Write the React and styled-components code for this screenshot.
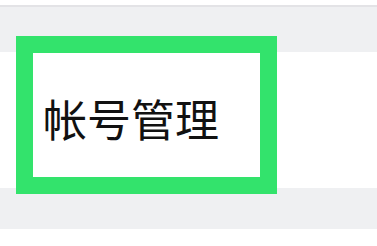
import styled, { createGlobalStyle } from 'styled-components';

const GlobalStyle = createGlobalStyle`
  html, body {
    margin: 0;
    padding: 0;
    background: #ffffff;
    font-family: "Noto Sans CJK SC", "Noto Sans", sans-serif;
  }
`;

const Page = styled.div`
  width: 377px;
  min-height: 246px;
  background: #ffffff;
`;

const TopBar = styled.div`
  height: 5px;
  background: #ffffff;
  border-bottom: 2px solid #e3e3e6;
`;

const Band = styled.div`
  height: ${(p) => p.$height}px;
  background: #eff0f2;
`;

const Row = styled.div`
  height: 136px;
  background: #ffffff;
  padding-top: 1px;
  box-sizing: border-box;
`;

const Item = styled.div`
  margin-left: 33px;
  width: 227px;
  height: 124px;
  box-sizing: border-box;
  padding: 6px 0 0 10px;
  display: flex;
  align-items: center;
  outline: 17px solid #33e36c;
  font-size: 44px;
  color: #111111;
  background: #ffffff;
`;

export default function App() {
  return (
    <Page>
      <GlobalStyle />
      <TopBar />
      <Band $height={45} />
      <Row>
        <Item>帐号管理</Item>
      </Row>
      <Band $height={41} />
    </Page>
  );
}
